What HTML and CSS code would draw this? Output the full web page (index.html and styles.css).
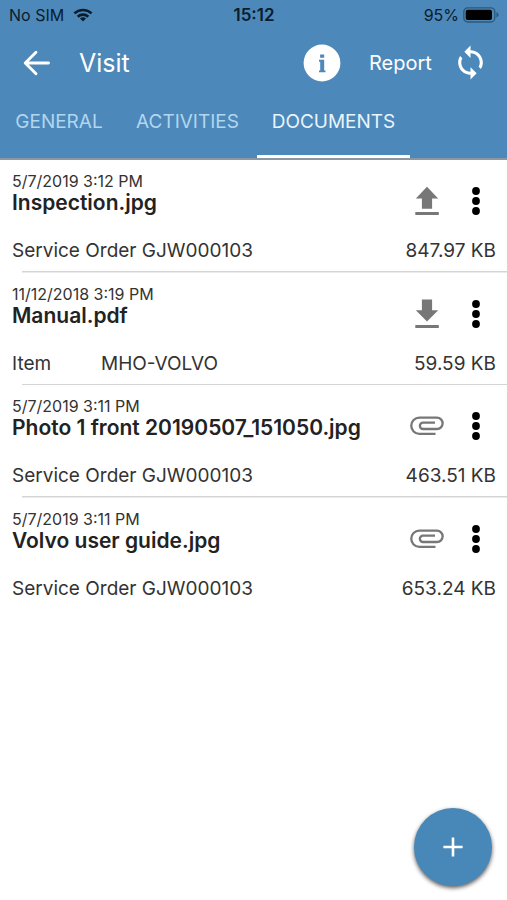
FILE: index.html
```html
<!DOCTYPE html>
<html lang="en">
<head>
<meta charset="utf-8">
<title>Visit</title>
<link rel="stylesheet" href="styles.css">
</head>
<body>
<svg class="defs" width="0" height="0">
  <symbol id="more" viewBox="0 0 8 28"><circle cx="4" cy="4" r="3.9"/><circle cx="4" cy="14" r="3.9"/><circle cx="4" cy="24" r="3.9"/></symbol>
  <symbol id="clip" viewBox="0 0 34 30"><path d="M25.5 22.8H9.3a8.05 8.05 0 0 1 0-16.1H27a5.65 5.65 0 0 1 0 11.3H13a3.15 3.15 0 0 1 0-6.3H25" fill="none" stroke="#777" stroke-width="2.3"/></symbol>
</svg>
<header class="header">
  <div class="status">
    <div class="carrier"><span>No SIM</span>
      <svg width="20" height="14" viewBox="0 0 20 14"><g fill="none" stroke="#0b1c2c" stroke-width="2.6"><path d="M1.4 5.4a12.4 12.4 0 0 1 17.2 0"/><path d="M4.7 8.7a7.7 7.7 0 0 1 10.6 0"/></g><path d="M10 13.6l-3-3a4.3 4.3 0 0 1 6 0z" fill="#0b1c2c"/></svg>
    </div>
    <div class="clock">15:12</div>
    <div class="battery"><span>95%</span>
      <svg width="36" height="16" viewBox="0 0 36 16"><rect x=".8" y=".8" width="31" height="14.2" rx="4" fill="none" stroke="#2f5877" stroke-width="1.3"/><rect x="2.7" y="2.7" width="26.3" height="10.4" rx="2" fill="#000"/><path d="M33.4 5.3q2.2.7 2.2 2.6t-2.2 2.6z" fill="#2f5877"/></svg>
    </div>
  </div>
  <div class="appbar">
    <svg class="back" width="27" height="26" viewBox="0 0 27 26"><path d="M25.5 13H2.5M13 2.2L2.2 13 13 23.8" fill="none" stroke="#fff" stroke-width="2.9" stroke-linecap="round" stroke-linejoin="round"/></svg>
    <h1 class="heading">Visit</h1>
    <svg class="info" width="38" height="38" viewBox="0 0 38 38"><circle cx="19" cy="19" r="18.4" fill="#fff"/><path d="M17.1 10.4h4.1v3.4h-4.1zM16 15.8h5.2v10.6h1.3v1.9H16v-1.9h1.2v-8.7H16z" fill="#4c88b9"/></svg>
    <span class="report">Report</span>
    <svg width="37" height="37" viewBox="0 0 24 24" fill="#fff"><path d="M12 4V1L8 5l4 4V6c3.31 0 6 2.69 6 6 0 1.01-.25 1.97-.7 2.8l1.46 1.46C19.54 15.03 20 13.57 20 12c0-4.42-3.58-8-8-8zm0 14c-3.31 0-6-2.69-6-6 0-1.01.25-1.97.7-2.8L5.24 7.74C4.46 8.97 4 10.43 4 12c0 4.42 3.58 8 8 8v3l4-4-4-4v3z"/></svg>
  </div>
  <nav class="tabs">
    <span class="tab general">GENERAL</span>
    <span class="tab activities">ACTIVITIES</span>
    <span class="tab active">DOCUMENTS</span>
  </nav>
</header>
<main class="list">
  <article class="row">
    <div class="top">
      <div class="text"><div class="date">5/7/2019 3:12 PM</div><div class="name inspection">Inspection.jpg</div></div>
      <svg class="kind" width="34" height="30" viewBox="0 0 34 30" fill="#777"><path d="M17 .8l11.2 11.7h-6.1v10.2H11.9V12.5H5.8zM5.3 26h23.5v3H5.3z"/></svg>
      <svg class="more" width="8" height="28"><use href="#more"/></svg>
    </div>
    <div class="meta"><span class="order">Service Order GJW000103</span><span class="size">847.97 KB</span></div>
  </article>
  <article class="row">
    <div class="top">
      <div class="text"><div class="date">11/12/2018 3:19 PM</div><div class="name manual">Manual.pdf</div></div>
      <svg class="kind" width="34" height="30" viewBox="0 0 34 30" fill="#777"><path d="M17 22.6L5.8 11.2h6.1V.4h10.2v10.8h6.1zM5.3 26h23.5v3H5.3z"/></svg>
      <svg class="more" width="8" height="28"><use href="#more"/></svg>
    </div>
    <div class="meta"><span class="item">Item</span><span class="code">MHO-VOLVO</span><span class="size">59.59 KB</span></div>
  </article>
  <article class="row">
    <div class="top">
      <div class="text"><div class="date">5/7/2019 3:11 PM</div><div class="name photo">Photo 1 front 20190507_151050.jpg</div></div>
      <svg class="kind" width="34" height="30"><use href="#clip"/></svg>
      <svg class="more" width="8" height="28"><use href="#more"/></svg>
    </div>
    <div class="meta"><span class="order">Service Order GJW000103</span><span class="size">463.51 KB</span></div>
  </article>
  <article class="row">
    <div class="top">
      <div class="text"><div class="date">5/7/2019 3:11 PM</div><div class="name guide">Volvo user guide.jpg</div></div>
      <svg class="kind" width="34" height="30"><use href="#clip"/></svg>
      <svg class="more" width="8" height="28"><use href="#more"/></svg>
    </div>
    <div class="meta"><span class="order">Service Order GJW000103</span><span class="size">653.24 KB</span></div>
  </article>
</main>
<button class="fab" aria-label="Add"><svg width="20" height="20" viewBox="0 0 20 20"><path d="M10 .4v19.2M.4 10h19.2" stroke="#fff" stroke-width="2.6"/></svg></button>
</body>
</html>
```
FILE: styles.css
```css
* { box-sizing: border-box; }
body { margin: 0; height: 900px; overflow: hidden; background: #fff; color: #333; font-family: Inter, "Liberation Sans", sans-serif; white-space: nowrap; }
.defs { position: absolute; }
svg { display: block; flex: none; }
.header { height: 160px; background: #4c88b9; border-bottom: 2px solid #8b98a3; color: #fff; }
.status { height: 30px; display: grid; grid-template-columns: 1fr auto 1fr; align-items: center; padding: 0 8px 0 9px; color: #0b1c2c; font-size: 16px; }
.carrier, .battery { display: flex; align-items: center; }
.carrier { gap: 9px; }
.battery { justify-content: flex-end; gap: 4px; }
.clock { font-weight: 600; font-size: 17px; }
.appbar { height: 65px; display: flex; align-items: center; padding: 0 18px 0 23px; }
.heading { margin: 0 0 0 29px; font-size: 25px; font-weight: 400; }
.info { margin-left: auto; }
.report { width: 62px; margin: 0 21px 0 28px; font-size: 20px; }
.tabs { height: 63px; display: flex; font-size: 19px; line-height: 54px; }
.tab { color: #b2d6f0; text-align: center; }
.general { width: 118px; }
.activities { width: 139px; }
.active { width: 153px; color: #e8f5fd; border-bottom: 3px solid #fff; }
.row { height: 112.6px; padding: 12px 11px 0 12px; background: linear-gradient(#d5d5d7, #d5d5d7) 22px bottom / 100% 1.5px no-repeat; }
.row:last-child { background: none; }
.top { height: 64px; display: flex; }
.text { flex: 1; }
.date { font-size: 16px; line-height: 18px; }
.name { font-size: 21px; line-height: 26px; font-weight: 600; color: #222; }
.kind { margin: 14px 28px 0 0; }
.more { margin: 15px 16px 0 0; }
.meta { display: flex; font-size: 19px; line-height: 30px; }
.item { width: 89px; }
.size { margin-left: auto; }
.fab { position: fixed; left: 414px; top: 808px; width: 78px; height: 78px; border: 0; border-radius: 50%; background: #4788b9; display: grid; place-items: center; box-shadow: 0 2px 4px rgba(0,0,0,.65); }
```
